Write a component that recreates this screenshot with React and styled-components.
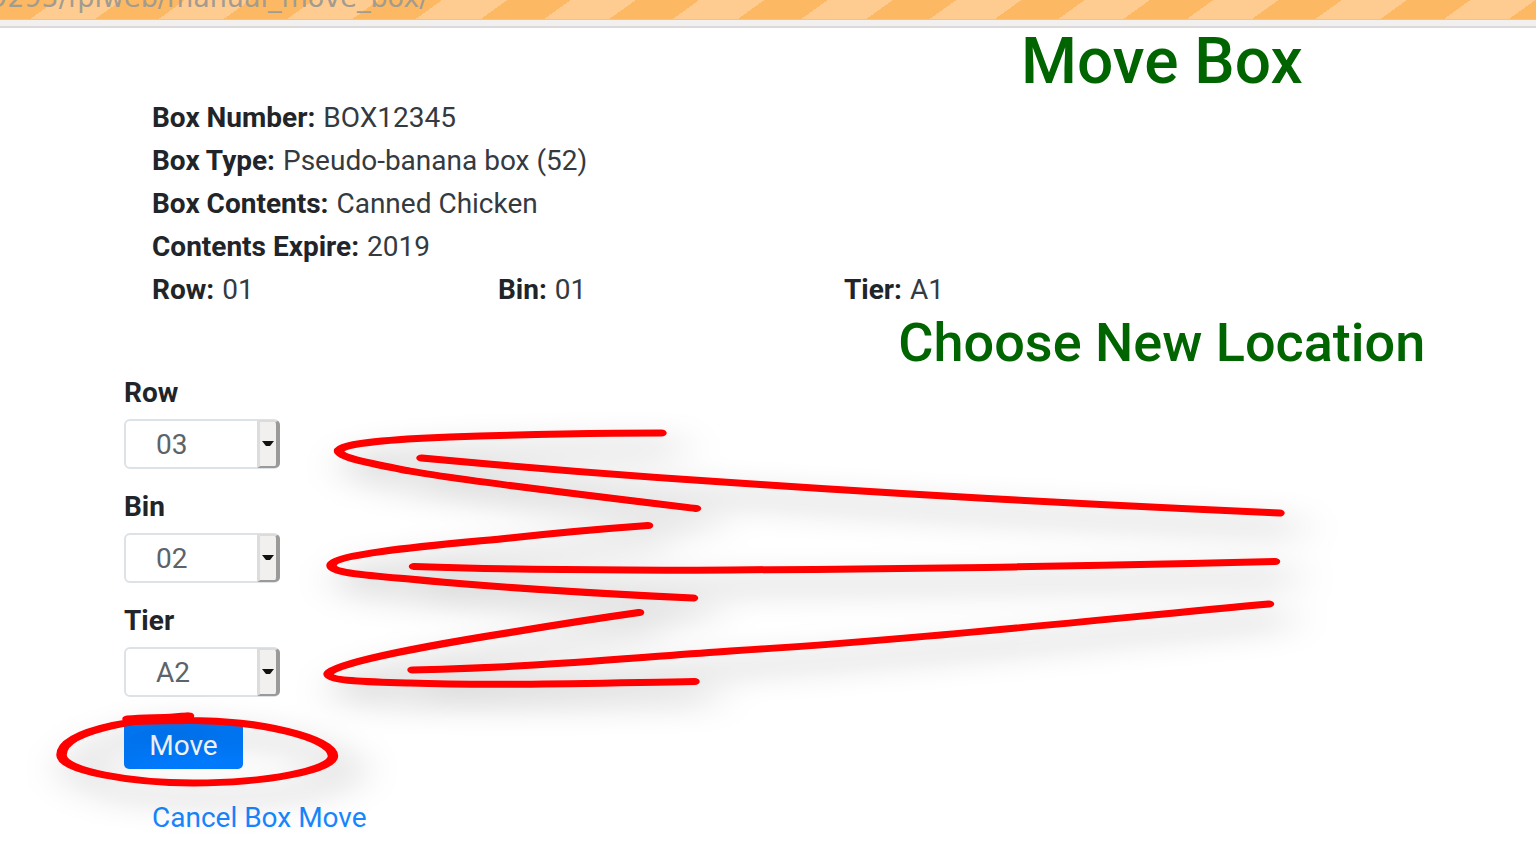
import React from "react";
import styled, { createGlobalStyle } from "styled-components";

const GlobalStyle = createGlobalStyle`
  *, *::before, *::after { box-sizing: border-box; }
  html { overflow: hidden; }
  body {
    margin: 0;
    background: #fff;
    color: #212529;
    font-family: Roboto, "Liberation Sans", sans-serif;
    font-size: 28px;
    line-height: 43px;
  }
`;

const Page = styled.div`
  position: relative;
  min-height: 100vh;
  overflow: hidden;
`;

const AddressBar = styled.header`
  display: flex;
  align-items: flex-end;
  height: 20px;
  overflow: hidden;
  border-bottom: 1px solid #cbc9c9;
  background: repeating-linear-gradient(
    144.3deg,
    #fdb863 0 33px,
    #fecc91 33px 71px,
    #fdb863 71px 75px
  );
`;

const Address = styled.span`
  margin-left: -10px;
  color: #a39b8f;
  font-family: "DejaVu Sans", sans-serif;
  font-size: 27px;
  line-height: 42px;
  white-space: nowrap;
`;

const ToolbarEdge = styled.div`
  height: 8px;
  border-bottom: 2px solid #dcd9da;
  background: #f1f0ef;
`;

const Main = styled.main`
  padding-left: 124px;
`;

const Container = styled.div`
  width: 147%;
`;

const Title = styled.h1`
  margin: 0;
  padding: 2px 0;
  color: #006400;
  font-size: 64px;
  font-weight: 500;
  line-height: 64px;
  text-align: center;
`;

const Subtitle = styled(Title)`
  padding: 4px 0 0;
  font-size: 54px;
  line-height: 56px;
`;

const Details = styled.dl`
  display: grid;
  grid-template-columns: repeat(6, 1fr);
  margin: 0;
`;

const Detail = styled.div`
  display: flex;
  gap: 8px;
  grid-column: ${(p) => (p.$wide ? "1 / -1" : "auto")};
  padding-left: 28px;
  white-space: nowrap;
`;

const Term = styled.dt`
  font-weight: 700;
`;

const Value = styled.dd`
  margin: 0;
  color: #343a3f;
`;

const Form = styled.form`
  display: flex;
  flex-direction: column;
  align-items: flex-start;
`;

const Field = styled.div`
  display: flex;
  flex-direction: column;
  gap: 5px;
  padding-bottom: 16px;
`;

const Label = styled.label`
  font-weight: 700;
`;

const SelectFrame = styled.div`
  position: relative;
  width: 156px;
`;

const Select = styled.select`
  display: block;
  appearance: none;
  width: 100%;
  height: 50px;
  padding: 0 24px 0 30px;
  border: 2px solid #dde2e7;
  border-radius: 6px;
  background: #fff;
  color: #5c646b;
  font: inherit;
`;

const DropMark = styled.span`
  position: absolute;
  top: 1px;
  right: 0;
  bottom: 1px;
  display: flex;
  align-items: center;
  justify-content: center;
  width: 23px;
  border-style: solid;
  border-width: 2px 4px 2px 3px;
  border-color: #dadbdd #9b9a99 #9b9a99 #dcdcdc;
  border-radius: 0 5px 5px 0;
  background: #f1f0ef;
  pointer-events: none;
`;

const MoveButton = styled.button`
  width: 119px;
  height: 48px;
  margin-top: 8px;
  border: 0;
  border-radius: 5px;
  background: #007bff;
  color: #fff;
  font: inherit;
`;

const CancelLink = styled.a`
  display: inline-block;
  margin: 27px 0 0 28px;
  color: #1686ff;
  text-decoration: none;
`;

const Annotations = styled.svg`
  position: absolute;
  top: 0;
  left: 0;
  width: 1536px;
  height: 862px;
  pointer-events: none;
`;

const details = [
  { term: "Box Number:", value: "BOX12345", wide: true },
  { term: "Box Type:", value: "Pseudo-banana box (52)", wide: true },
  { term: "Box Contents:", value: "Canned Chicken", wide: true },
  { term: "Contents Expire:", value: "2019", wide: true },
  { term: "Row:", value: "01" },
  { term: "Bin:", value: "01" },
  { term: "Tier:", value: "A1" },
];

const fields = [
  { id: "row", label: "Row", value: "03", options: ["01", "02", "03", "04"] },
  { id: "bin", label: "Bin", value: "02", options: ["01", "02", "03"] },
  { id: "tier", label: "Tier", value: "A2", options: ["A1", "A2", "B1", "B2"] },
];

function SelectField({ id, label, value, options }) {
  return (
    <Field>
      <Label htmlFor={id}>{label}</Label>
      <SelectFrame>
        <Select id={id} name={id} defaultValue={value}>
          {options.map((o) => (
            <option key={o}>{o}</option>
          ))}
        </Select>
        <DropMark aria-hidden="true">
          <svg width="12" height="6" viewBox="0 0 12 6">
            <path d="M0 0H12L8 5H4Z" fill="#111" />
          </svg>
        </DropMark>
      </SelectFrame>
    </Field>
  );
}

function PenMarks() {
  return (
    <Annotations viewBox="0 0 1536 862" aria-hidden="true">
      <defs>
        <filter id="pen-shadow" filterUnits="userSpaceOnUse" x="-40" y="340" width="1104" height="562">
          <feDropShadow dx="10" dy="15" stdDeviation="15" floodColor="#000" floodOpacity="0.32" />
        </filter>
      </defs>
      <g
        transform="scale(1.5 1)"
        filter="url(#pen-shadow)"
        fill="none"
        stroke="#f00"
        strokeWidth="7"
        strokeLinecap="round"
        strokeLinejoin="round"
      >
        <path d="M441 433C390 433 340 435 300 437C265 439 226 443 226 451C226 458 252 465 273 471C310 481 400 497 464 508.500" />
        <path d="M281 458C360 469 420 476 487 482.500C570 491 700 503 853 513" />
        <path d="M432 525.500C400 529 370 533 340 538C300 544 221 553 221 565.500C221 573 247 576 273 579C320 586 390 593 462 598" />
        <path d="M276 566.500C340 570 420 570.500 487 570C600 569 730 566 850 561.500" />
        <path d="M426 612.500C400 618 370 625 340 632.500C300 642 219 663 219 674C219 681 248 682 273 683C330 686 400 683 463 681.500" />
        <path d="M275 670C350 668 420 658 487 651C600 641 730 620 846 604" />
        <path d="M85 719C98 717.500 111 718 126 716C105 717 41 727 41 755C41 771 88 783 129 783C178 783 222 770 222 756C222 738 172 720 126 720.500C110 721 98 721 85 722" />
      </g>
    </Annotations>
  );
}

export default function App() {
  return (
    <>
      <GlobalStyle />
      <Page>
        <AddressBar>
          <Address>9295/fpiweb/manual_move_box/</Address>
        </AddressBar>
        <ToolbarEdge />
        <Main>
          <Container>
            <Title>Move Box</Title>
            <Details>
              {details.map((d) => (
                <Detail key={d.term} $wide={d.wide}>
                  <Term>{d.term}</Term>
                  <Value>{d.value}</Value>
                </Detail>
              ))}
            </Details>
            <Subtitle as="h2">Choose New Location</Subtitle>
            <Form onSubmit={(e) => e.preventDefault()}>
              {fields.map((f) => (
                <SelectField key={f.id} {...f} />
              ))}
              <MoveButton type="submit">Move</MoveButton>
            </Form>
            <CancelLink href="#cancel">Cancel Box Move</CancelLink>
          </Container>
        </Main>
        <PenMarks />
      </Page>
    </>
  );
}
